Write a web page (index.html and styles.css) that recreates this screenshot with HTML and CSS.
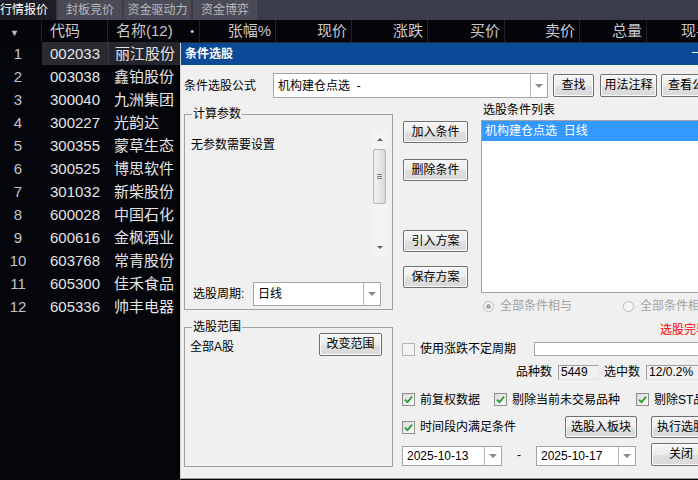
FILE: index.html
```html
<!DOCTYPE html>
<html lang="zh-CN">
<head>
    <meta charset="UTF-8">
    <title>行情报价 - 条件选股</title>
    <link rel="stylesheet" href="styles.css">
</head>
<body>
<div class="screen">
    <div class="tabs">
        <div class="tab active">行情报价</div>
        <div class="tab">封板竞价</div>
        <div class="tab wide">资金驱动力</div>
        <div class="tab">资金博弈</div>
    </div>

    <div class="quote">
        <div class="row head">
            <div class="c num"><span class="sort">▼</span></div>
            <div class="c code">代码</div>
            <div class="c name"><span>名称(12)</span><span class="dot">•</span></div>
            <div class="c val">张幅%</div>
            <div class="c val">现价</div>
            <div class="c val">涨跌</div>
            <div class="c val">买价</div>
            <div class="c val">卖价</div>
            <div class="c val">总量</div>
            <div class="c val">现手</div>
        </div>
        <div class="row sel"><div class="c num">1</div><div class="c code">002033</div><div class="c name">丽江股份</div></div>
        <div class="row"><div class="c num">2</div><div class="c code">003038</div><div class="c name">鑫铂股份</div></div>
        <div class="row"><div class="c num">3</div><div class="c code">300040</div><div class="c name">九洲集团</div></div>
        <div class="row"><div class="c num">4</div><div class="c code">300227</div><div class="c name">光韵达</div></div>
        <div class="row"><div class="c num">5</div><div class="c code">300355</div><div class="c name">蒙草生态</div></div>
        <div class="row"><div class="c num">6</div><div class="c code">300525</div><div class="c name">博思软件</div></div>
        <div class="row"><div class="c num">7</div><div class="c code">301032</div><div class="c name">新柴股份</div></div>
        <div class="row"><div class="c num">8</div><div class="c code">600028</div><div class="c name">中国石化</div></div>
        <div class="row"><div class="c num">9</div><div class="c code">600616</div><div class="c name">金枫酒业</div></div>
        <div class="row"><div class="c num">10</div><div class="c code">603768</div><div class="c name">常青股份</div></div>
        <div class="row"><div class="c num">11</div><div class="c code">605300</div><div class="c name">佳禾食品</div></div>
        <div class="row"><div class="c num">12</div><div class="c code">605336</div><div class="c name">帅丰电器</div></div>
    </div>

    <!-- 条件选股 window -->
    <div class="dialog">
        <div class="dlg-title"><span>条件选股</span><span class="dlg-min"></span></div>
        <div class="dlg-body">
            <div class="formula-row">
                <span class="formula-label">条件选股公式</span>
                <div class="combo formula-combo"><span class="combo-text">机构建仓点选&nbsp;&nbsp;-</span><span class="combo-arrow"></span></div>
                <button class="btn btn-find">查找</button>
                <button class="btn btn-usage">用法注释</button>
                <button class="btn btn-view">查看公式</button>
            </div>

            <div class="main">
                <div class="group params">
                    <div class="group-title">计算参数</div>
                    <div class="param-box">
                        <div class="param-text">无参数需要设置</div>
                        <div class="scrollbar">
                            <span class="sb-up"></span>
                            <span class="sb-thumb"><i></i><i></i><i></i></span>
                            <span class="sb-track"></span>
                            <span class="sb-down"></span>
                        </div>
                    </div>
                    <div class="period-row">
                        <span class="period-label">选股周期:</span>
                        <div class="combo period-combo"><span class="combo-text">日线</span><span class="combo-arrow"></span></div>
                    </div>
                </div>

                <div class="action-col">
                    <button class="btn btn-act btn-add">加入条件</button>
                    <button class="btn btn-act btn-del">删除条件</button>
                    <button class="btn btn-act btn-import">引入方案</button>
                    <button class="btn btn-act btn-save">保存方案</button>
                </div>

                <div class="cond-col">
                    <div class="cond-label">选股条件列表</div>
                    <div class="cond-list">
                        <div class="cond-item selected">机构建仓点选&nbsp;&nbsp;日线</div>
                    </div>
                    <div class="radio-row">
                        <span class="radio-item"><span class="radio on"></span>全部条件相与</span>
                        <span class="radio-item"><span class="radio"></span>全部条件相或</span>
                    </div>
                </div>
            </div>

            <div class="lower">
                <div class="group scope">
                    <div class="group-title">选股范围</div>
                    <div class="scope-row">
                        <span class="scope-text">全部A股</span>
                        <button class="btn btn-scope">改变范围</button>
                    </div>
                </div>

                <div class="options">
                    <div class="status">选股完毕</div>
                    <div class="opt-row opt-range">
                        <span class="check off"></span>
                        <span>使用涨跌不定周期</span>
                        <span class="range-input"></span>
                    </div>
                    <div class="opt-row opt-count">
                        <span class="count-label">品种数</span>
                        <span class="count-box">5449</span>
                        <span class="count-label2">选中数</span>
                        <span class="count-box wide">12/0.2%</span>
                    </div>
                    <div class="opt-row opt-checks">
                        <span class="check"><svg width="9" height="9" viewBox="0 0 9 9"><path d="M1 4.6 L3.5 7.2 L8 1.6" stroke="#1f9e2c" stroke-width="1.8" fill="none"/></svg></span>
                        <span>前复权数据</span>
                        <span class="check gap1"><svg width="9" height="9" viewBox="0 0 9 9"><path d="M1 4.6 L3.5 7.2 L8 1.6" stroke="#1f9e2c" stroke-width="1.8" fill="none"/></svg></span>
                        <span>剔除当前未交易品种</span>
                        <span class="check gap2"><svg width="9" height="9" viewBox="0 0 9 9"><path d="M1 4.6 L3.5 7.2 L8 1.6" stroke="#1f9e2c" stroke-width="1.8" fill="none"/></svg></span>
                        <span>剔除ST品种</span>
                    </div>
                    <div class="opt-row opt-time">
                        <span class="check"><svg width="9" height="9" viewBox="0 0 9 9"><path d="M1 4.6 L3.5 7.2 L8 1.6" stroke="#1f9e2c" stroke-width="1.8" fill="none"/></svg></span>
                        <span>时间段内满足条件</span>
                        <button class="btn btn-block">选股入板块</button>
                        <button class="btn btn-run">执行选股</button>
                    </div>
                    <div class="opt-row opt-dates">
                        <div class="combo date-combo"><span class="combo-text">2025-10-13</span><span class="combo-arrow"></span></div>
                        <span class="date-sep">-</span>
                        <div class="combo date-combo"><span class="combo-text">2025-10-17</span><span class="combo-arrow"></span></div>
                        <button class="btn btn-close">关闭</button>
                    </div>
                </div>
            </div>
        </div>
    </div>
</div>
</body>
</html>
```

FILE: styles.css
```css
* {
    box-sizing: border-box;
}

body {
    margin: 0;
    background: #05060c;
    font-family: "Liberation Sans", "Noto Sans CJK SC", sans-serif;
}

.screen {
    position: relative;
    width: 698px;
    height: 480px;
    overflow: hidden;
    background: #05060c;
}

/* tab strip */
.tabs {
    display: flex;
    gap: 2px;
    height: 20px;
    background: #3b3c49;
}

.tab {
    width: 64px;
    font-size: 12px;
    line-height: 20px;
    text-align: center;
    color: #b7b8be;
    background: #4a4b56;
}

.tab.wide {
    width: 67px;
}

.tab.active {
    width: 56px;
    padding-right: 8px;
    color: #fff;
    background: #1d1e25;
}

/* quote table */
.row {
    display: grid;
    grid-template-columns: 42px 66px 92px 76px 76px 76px 77px 75px 67px 69px;
    height: 23px;
    font-size: 15px;
    line-height: 23px;
    color: #e4e4e6;
}

.row .c {
    white-space: nowrap;
    overflow: hidden;
}

.row .num {
    text-align: center;
    padding-right: 6px;
    color: #c4c4c8;
}

.row .code {
    padding-left: 8px;
}

.row .name {
    padding-left: 6px;
}

.head {
    height: 22px;
    line-height: 22px;
    color: #c9c9cd;
    background: #040409;
}

.head .c {
    border-right: 1px solid #20212a;
}

.head .num {
    text-align: left;
    padding: 0 0 0 10px;
}

.head .name {
    display: flex;
    justify-content: space-between;
    padding: 0 5px 0 8px;
}

.head .val {
    text-align: right;
    padding-right: 4px;
}

.sort {
    font-size: 9px;
    color: #c0c0c0;
}

.dot {
    font-size: 11px;
}

.sel {
    background: #2a2b32;
}

.sel .num {
    background: #05060c;
}

.sel .name {
    background: #25262d;
    border-left: 1px solid #3a3b44;
}

/* dialog */
.dialog {
    position: absolute;
    left: 180px;
    top: 43px;
    width: 530px;
    height: 436px;
    background: #f0f0f0;
    border-left: 1px solid #d4d4d4;
    border-bottom: 1px solid #9a9a9a;
    font-size: 12px;
    line-height: 14px;
    color: #000;
}

.dlg-title {
    display: flex;
    height: 22px;
    padding-left: 4px;
    align-items: center;
    background: #0b4a96;
    color: #fff;
    font-weight: bold;
}

.dlg-min {
    align-self: flex-start;
    width: 7px;
    height: 1px;
    margin: 9px 11px 0 auto;
    background: #fff;
}

.dlg-body {
    padding-left: 3px;
}

.formula-row > *,
.opt-row > *,
.radio-item,
.radio {
    flex-shrink: 0;
}

.btn {
    height: 23px;
    padding: 0;
    border: 1px solid #707070;
    border-radius: 2px;
    background: linear-gradient(#f6f6f6, #ececec 50%, #dfdfdf 51%, #d9d9d9);
    box-shadow: inset 0 0 0 1px #fbfbfb;
    font: 12px/21px "Liberation Sans", "Noto Sans CJK SC", sans-serif;
    color: #000;
    text-align: center;
    white-space: nowrap;
    overflow: hidden;
}

.combo {
    display: flex;
    background: #fff;
    border: 1px solid #a5a5a5;
}

.combo-text {
    flex: 1;
    padding-left: 4px;
    align-self: center;
    white-space: nowrap;
}

.combo-arrow {
    display: flex;
    width: 17px;
    align-items: center;
    justify-content: center;
    border-left: 1px solid #b5b5b5;
}

.combo-arrow::before {
    content: "";
    border-left: 4px solid transparent;
    border-right: 4px solid transparent;
    border-top: 4px solid #8a8a8a;
}

.formula-row {
    display: flex;
    height: 25px;
    margin-top: 8px;
    align-items: center;
}

.formula-label {
    width: 89px;
}

.formula-combo {
    width: 275px;
    height: 25px;
}

.btn-find {
    width: 41px;
    margin-left: 5px;
}

.btn-usage {
    width: 57px;
    margin-left: 6px;
}

.btn-view {
    width: 62px;
    margin-left: 4px;
}

/* group boxes */
.group {
    border: 1px solid #a0a0a0;
    flex-shrink: 0;
}

.group-title {
    width: fit-content;
    margin: -8px 0 0 7px;
    padding: 0 1px;
    background: #f0f0f0;
}

.main {
    display: flex;
    height: 212px;
    align-items: flex-start;
}

.params {
    width: 209px;
    height: 196px;
    margin-top: 16px;
}

.param-box {
    display: flex;
    height: 125px;
    margin: 10px 5px 0 3px;
}

.param-text {
    flex: 1;
    padding: 7px 0 0 3px;
}

.scrollbar {
    display: flex;
    flex-direction: column;
    width: 15px;
    background: #f4f4f4;
}

.sb-up,
.sb-down {
    display: flex;
    height: 17px;
    align-items: center;
    justify-content: center;
}

.sb-up::before {
    content: "";
    border-left: 3px solid transparent;
    border-right: 3px solid transparent;
    border-bottom: 3px solid #606060;
}

.sb-down::before {
    content: "";
    border-left: 3px solid transparent;
    border-right: 3px solid transparent;
    border-top: 3px solid #606060;
}

.sb-thumb {
    display: flex;
    flex-direction: column;
    gap: 1px;
    height: 55px;
    margin: 1px 1px 0;
    align-items: center;
    justify-content: center;
    border: 1px solid #b3b3b3;
    border-radius: 2px;
    background: linear-gradient(to right, #f3f3f3, #dadada);
}

.sb-thumb i {
    width: 5px;
    height: 1px;
    background: #7f7f7f;
}

.sb-track {
    flex: 1;
}

.period-row {
    display: flex;
    height: 24px;
    margin: 26px 0 0 8px;
    align-items: center;
}

.period-label {
    width: 60px;
}

.period-combo {
    width: 128px;
    height: 24px;
}

.action-col {
    display: flex;
    flex-direction: column;
    width: 65px;
    margin-left: 10px;
    flex-shrink: 0;
}

.btn-act {
    width: 65px;
    height: 22px;
    line-height: 20px;
}

.btn-add {
    margin-top: 23px;
}

.btn-del {
    margin-top: 16px;
}

.btn-import {
    margin-top: 49px;
}

.btn-save {
    margin-top: 14px;
}

.cond-col {
    width: 240px;
    margin-left: 13px;
    flex-shrink: 0;
}

.cond-label {
    margin: 5px 0 0 2px;
}

.cond-list {
    height: 173px;
    margin-top: 3px;
    background: #fff;
    border: 1px solid #a0a0a0;
}

.cond-item {
    height: 20px;
    padding-left: 3px;
    line-height: 20px;
}

.cond-item.selected {
    background: #3399ff;
    color: #fff;
}

.radio-row {
    display: flex;
    height: 14px;
    margin-top: 6px;
    color: #a3a3a3;
    white-space: nowrap;
}

.radio-item {
    display: flex;
    width: 140px;
    align-items: center;
}

.radio {
    display: flex;
    width: 11px;
    height: 11px;
    margin: 0 6px 0 2px;
    align-items: center;
    justify-content: center;
    border: 1px solid #b9b9b9;
    border-radius: 50%;
    background: #f6f6f6;
}

.radio.on::before {
    content: "";
    width: 5px;
    height: 5px;
    border-radius: 50%;
    background: #a9a9a9;
}

/* lower part */
.lower {
    display: flex;
    align-items: flex-start;
}

.scope {
    width: 209px;
    height: 140px;
    margin-top: 17px;
}

.scope-row {
    display: flex;
    margin-top: -1px;
    padding: 0 10px 0 5px;
    justify-content: space-between;
    align-items: flex-start;
}

.scope-text {
    margin-top: 7px;
}

.btn-scope {
    width: 63px;
}

.options {
    margin-left: 9px;
    width: 320px;
    flex-shrink: 0;
}

.status {
    height: 14px;
    margin-top: 13px;
    padding-left: 258px;
    color: #ff0000;
    white-space: nowrap;
}

.opt-row {
    display: flex;
    align-items: center;
    white-space: nowrap;
}

.check {
    display: flex;
    width: 13px;
    height: 13px;
    margin-right: 5px;
    align-items: center;
    justify-content: center;
    border: 1px solid #8e8f8f;
    background: linear-gradient(135deg, #dadada, #fbfbfb);
}

.check.off {
    border-color: #b4b4b4;
    background: #f4f4f4;
}

.opt-range {
    height: 16px;
    margin-top: 4px;
}

.range-input {
    width: 200px;
    height: 14px;
    margin-left: 18px;
    background: #fff;
    border: 1px solid #a8a8a8;
}

.opt-count {
    height: 16px;
    margin-top: 7px;
}

.count-label {
    margin-left: 114px;
}

.count-label2 {
    margin-left: 5px;
}

.count-box {
    width: 41px;
    height: 15px;
    margin-left: 6px;
    padding-left: 2px;
    line-height: 13px;
    border: 1px solid;
    border-color: #a0a0a0 #e4e4e4 #e4e4e4 #a0a0a0;
}

.count-box.wide {
    width: 60px;
}

.opt-checks {
    height: 15px;
    margin-top: 12px;
}

.check.gap1 {
    margin-left: 14px;
}

.check.gap2 {
    margin-left: 16px;
}

.opt-time {
    height: 22px;
    margin-top: 9px;
}

.btn-block {
    width: 72px;
    height: 22px;
    line-height: 20px;
    margin-left: 49px;
}

.btn-run {
    width: 60px;
    height: 22px;
    line-height: 20px;
    margin-left: 14px;
}

.opt-dates {
    height: 23px;
    margin-top: 5px;
    align-items: flex-end;
}

.date-combo {
    width: 100px;
    height: 20px;
}

.date-sep {
    width: 34px;
    text-align: center;
    align-self: center;
}

.btn-close {
    width: 60px;
    margin-left: 15px;
}
```
